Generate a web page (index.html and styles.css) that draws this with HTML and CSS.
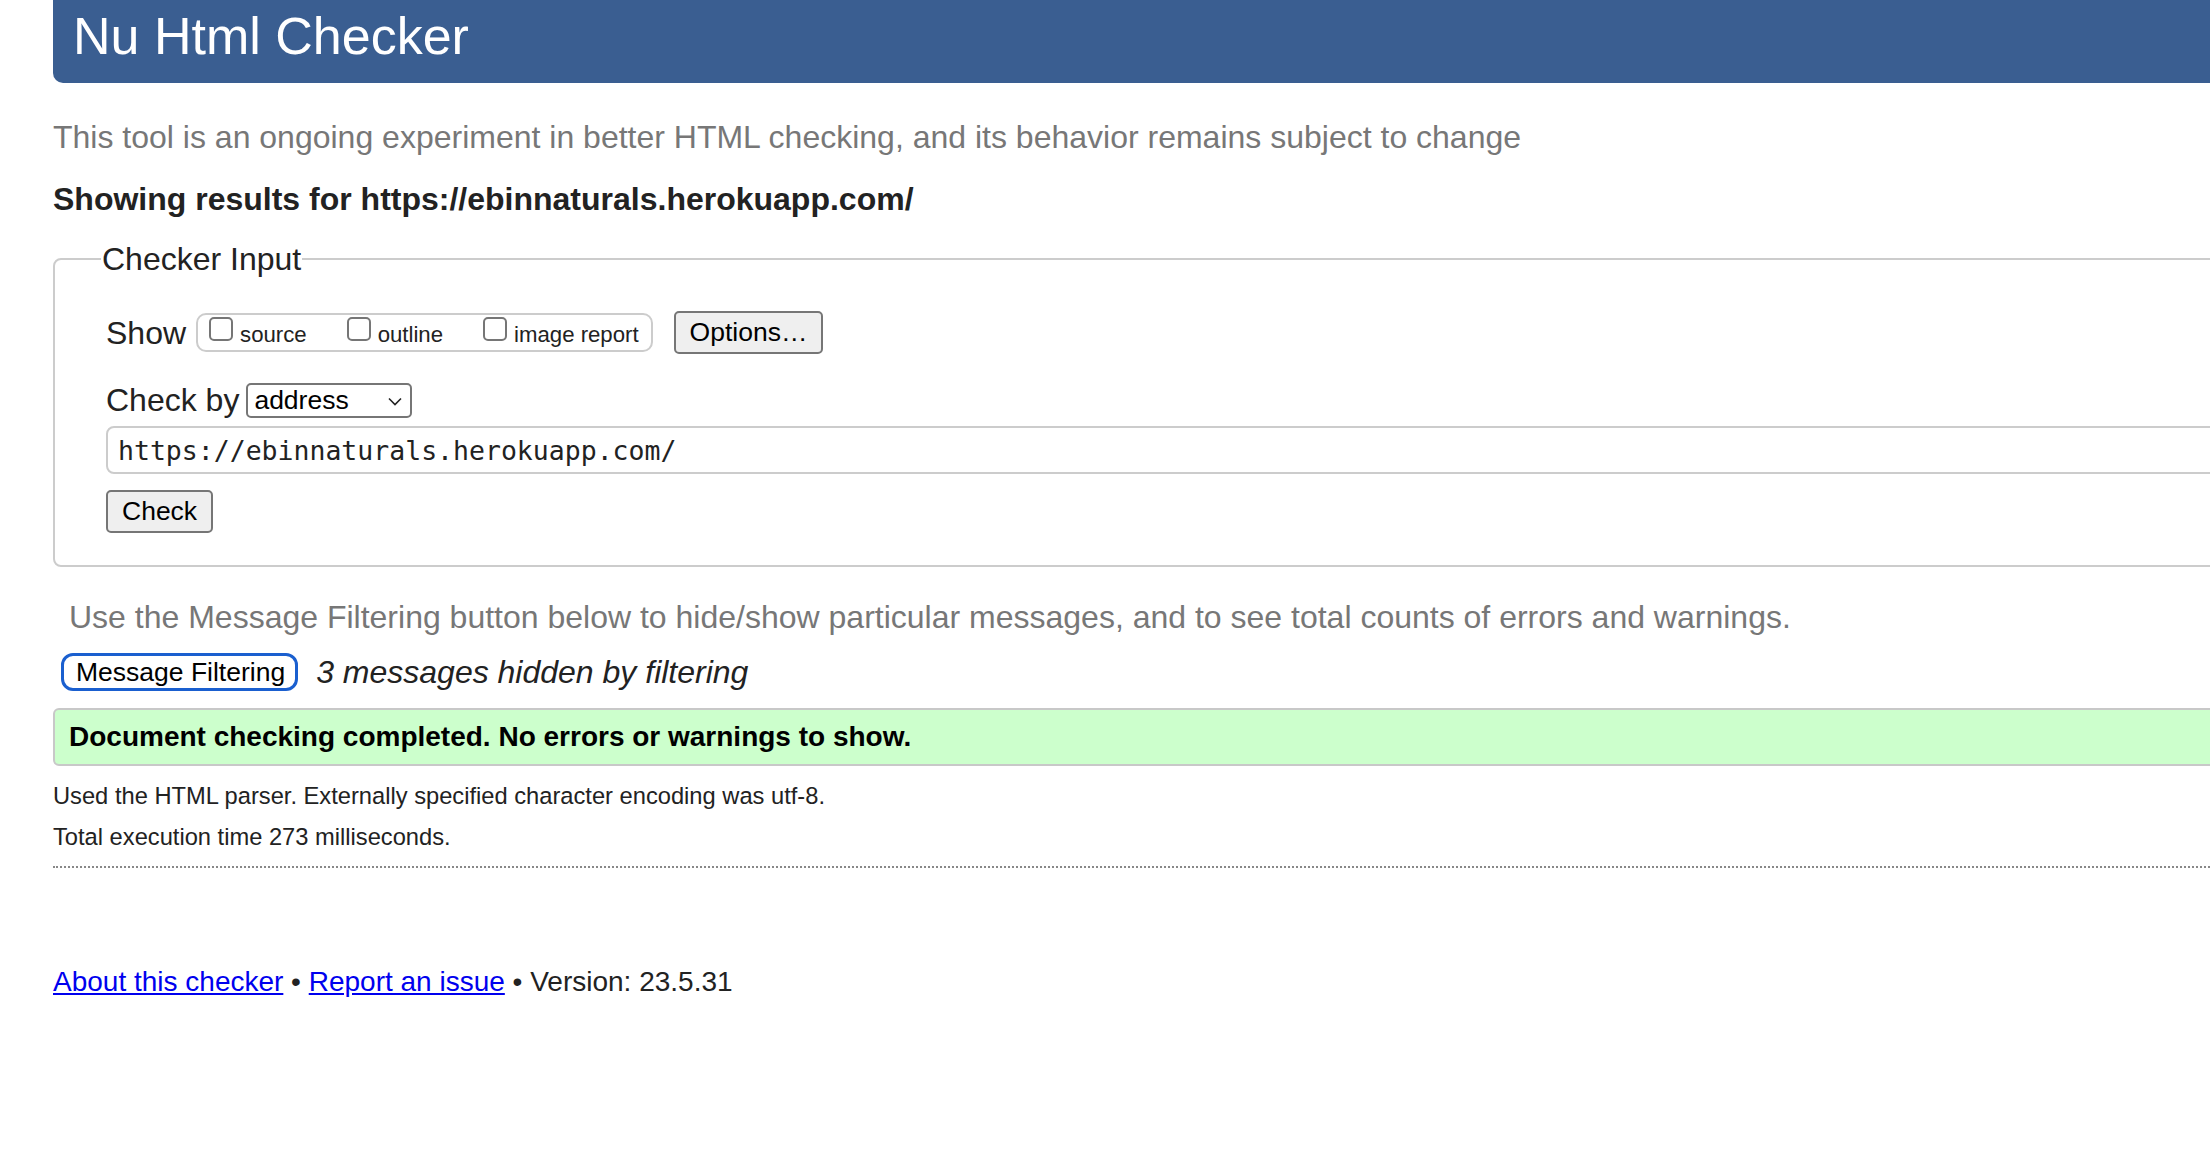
FILE: index.html
```html
<!DOCTYPE html>
<html lang="en">
<head>
<meta charset="utf-8">
<title>Showing results for https://ebinnaturals.herokuapp.com/ - Nu Html Checker</title>
<link rel="stylesheet" href="styles.css">
</head>
<body>
<div class="page">
  <header class="masthead">
    <h1 class="title">Nu Html Checker</h1>
  </header>

  <p class="intro">This tool is an ongoing experiment in better HTML checking, and its behavior remains subject to change</p>
  <h2 class="results-for">Showing results for https://ebinnaturals.herokuapp.com/</h2>

  <form class="checker">
    <fieldset class="checker-input">
      <legend class="checker-legend">Checker Input</legend>

      <div class="show-row">
        <span class="row-label">Show</span>
        <span class="show-group">
          <label class="show-item"><input type="checkbox" class="box"><span class="show-text">source</span></label>
          <label class="show-item"><input type="checkbox" class="box"><span class="show-text">outline</span></label>
          <label class="show-item"><input type="checkbox" class="box"><span class="show-text">image report</span></label>
        </span>
        <button type="button" class="btn btn-options">Options…</button>
      </div>

      <div class="checkby-row">
        <span class="row-label">Check by</span>
        <span class="select-wrap">
          <select class="select"><option>address</option></select>
          <svg class="chevron" width="14" height="9" viewBox="0 0 14 9" aria-hidden="true"><path d="M1 1.5 L7 7.5 L13 1.5" fill="none" stroke="#222" stroke-width="1.6"/></svg>
        </span>
      </div>

      <input class="url" type="url" value="https://ebinnaturals.herokuapp.com/">

      <div class="submit-row">
        <button type="button" class="btn btn-check">Check</button>
      </div>
    </fieldset>
  </form>

  <p class="filter-note">Use the Message Filtering button below to hide/show particular messages, and to see total counts of errors and warnings.</p>

  <div class="filter-row">
    <button type="button" class="btn-filter">Message Filtering</button>
    <span class="hidden-count">3 messages hidden by filtering</span>
  </div>

  <div class="success">
    <p class="success-text">Document checking completed. No errors or warnings to show.</p>
  </div>

  <p class="meta meta-first">Used the HTML parser. Externally specified character encoding was utf-8.</p>
  <p class="meta meta-second">Total execution time 273 milliseconds.</p>

  <hr class="rule">

  <footer class="footer">
    <a class="footer-link" href="#">About this checker</a> • <a class="footer-link" href="#">Report an issue</a> • Version: 23.5.31
  </footer>
</div>
</body>
</html>
```

FILE: styles.css
```css
html {
  overflow: hidden;
}

body {
  margin: 0;
  background: #fff;
  color: #222;
  font-family: "Liberation Sans", Arial, Helvetica, sans-serif;
}

.page {
  width: 2400px;
  padding-left: 53px;
}

.masthead {
  height: 83px;
  box-sizing: border-box;
  background: #3a5e91;
  border-radius: 0 0 0 10px;
  padding: 6px 0 0 20px;
}

.title {
  margin: 0;
  font-size: 52px;
  line-height: 60px;
  font-weight: normal;
  color: #fff;
}

.intro {
  margin: 34px 0 0;
  font-size: 32px;
  line-height: 40px;
  color: #777;
}

.results-for {
  margin: 22px 0 0;
  font-size: 32px;
  line-height: 40px;
  font-weight: bold;
  color: #222;
}

.checker {
  margin: 20px 0 0;
}

.checker-input {
  margin: 0;
  border: 2px solid #ccc;
  border-radius: 8px;
  padding: 32px 0 32px 51px;
  min-width: 0;
}

.checker-legend {
  margin-left: -5px;
  padding: 0 1px;
  font-size: 32px;
  line-height: 40px;
  color: #222;
}

.show-row {
  display: flex;
  align-items: center;
  height: 43px;
}

.row-label {
  font-size: 32px;
  line-height: 40px;
  color: #222;
}

.show-row .row-label {
  margin-right: 10px;
}

.show-group {
  display: inline-flex;
  gap: 40px;
  border: 2px solid #ccc;
  border-radius: 10px;
  padding: 2px 12px 3px 11px;
}

.show-item {
  display: flex;
  align-items: flex-start;
  gap: 7px;
}

.box {
  appearance: none;
  -webkit-appearance: none;
  margin: 0;
  width: 24px;
  height: 24px;
  box-sizing: border-box;
  border: 2px solid #767676;
  border-radius: 5px;
  background: #fff;
}

.show-text {
  margin-top: 5px;
  font-size: 22.2px;
  line-height: 25px;
  color: #222;
}

.btn {
  box-sizing: border-box;
  height: 43px;
  border: 2px solid #767676;
  border-radius: 5px;
  background: #efefef;
  color: #000;
  font-family: "Liberation Sans", Arial, Helvetica, sans-serif;
  font-size: 26.5px;
  line-height: 39px;
  padding: 0 13px;
  margin: 0;
}

.btn-options {
  margin-left: 21px;
  padding: 0 14px;
}

.checkby-row {
  display: flex;
  align-items: center;
  height: 40px;
  margin-top: 26px;
}

.select-wrap {
  position: relative;
  display: inline-block;
  margin-left: 7px;
}

.select {
  appearance: none;
  -webkit-appearance: none;
  display: block;
  box-sizing: border-box;
  width: 166px;
  height: 35px;
  border: 2px solid #767676;
  border-radius: 5px;
  background: #fff;
  color: #000;
  font-family: "Liberation Sans", Arial, Helvetica, sans-serif;
  font-size: 26.5px;
  padding: 0 0 0 6px;
  margin: 0;
}

.chevron {
  position: absolute;
  right: 10px;
  top: 14px;
  pointer-events: none;
}

.url {
  display: block;
  box-sizing: border-box;
  width: calc(100% - 20px);
  height: 48px;
  margin: 6px 0 0;
  border: 2px solid #ccc;
  border-radius: 8px;
  padding: 0 10px;
  font-family: "DejaVu Sans Mono", "Liberation Mono", monospace;
  font-size: 26.5px;
  color: #222;
  background: #fff;
}

.submit-row {
  margin-top: 16px;
  display: flex;
}

.btn-check {
  padding: 0 14px;
}

.filter-note {
  margin: 30px 0 0 16px;
  font-size: 32px;
  line-height: 40px;
  color: #777;
}

.filter-row {
  display: flex;
  align-items: center;
  height: 38px;
  margin-top: 16px;
}

.btn-filter {
  box-sizing: border-box;
  height: 38px;
  margin: 0 0 0 8px;
  border: 3px solid #1a5fcf;
  border-radius: 12px;
  background: #fff;
  color: #000;
  font-family: "Liberation Sans", Arial, Helvetica, sans-serif;
  font-size: 26.5px;
  line-height: 32px;
  padding: 0 10px 0 12px;
}

.hidden-count {
  margin-left: 18px;
  font-size: 32px;
  font-style: italic;
  color: #222;
}

.success {
  box-sizing: border-box;
  height: 58px;
  margin-top: 17px;
  border: 2px solid #c8c8c8;
  border-radius: 6px;
  background: #ccffcc;
  padding: 0 14px;
}

.success-text {
  margin: 0;
  font-size: 28px;
  line-height: 54px;
  font-weight: bold;
  color: #000;
}

.meta {
  font-size: 23.7px;
  line-height: 30px;
  color: #222;
  margin: 0;
}

.meta-first {
  margin-top: 15px;
}

.meta-second {
  margin-top: 11px;
}

.rule {
  margin: 14px 0 0;
  border: 0;
  border-top: 2px dotted #888;
  height: 0;
}

.footer {
  margin-top: 96px;
  font-size: 28px;
  line-height: 36px;
  color: #222;
}

.footer-link {
  color: #0000ee;
  text-decoration: underline;
}
```
